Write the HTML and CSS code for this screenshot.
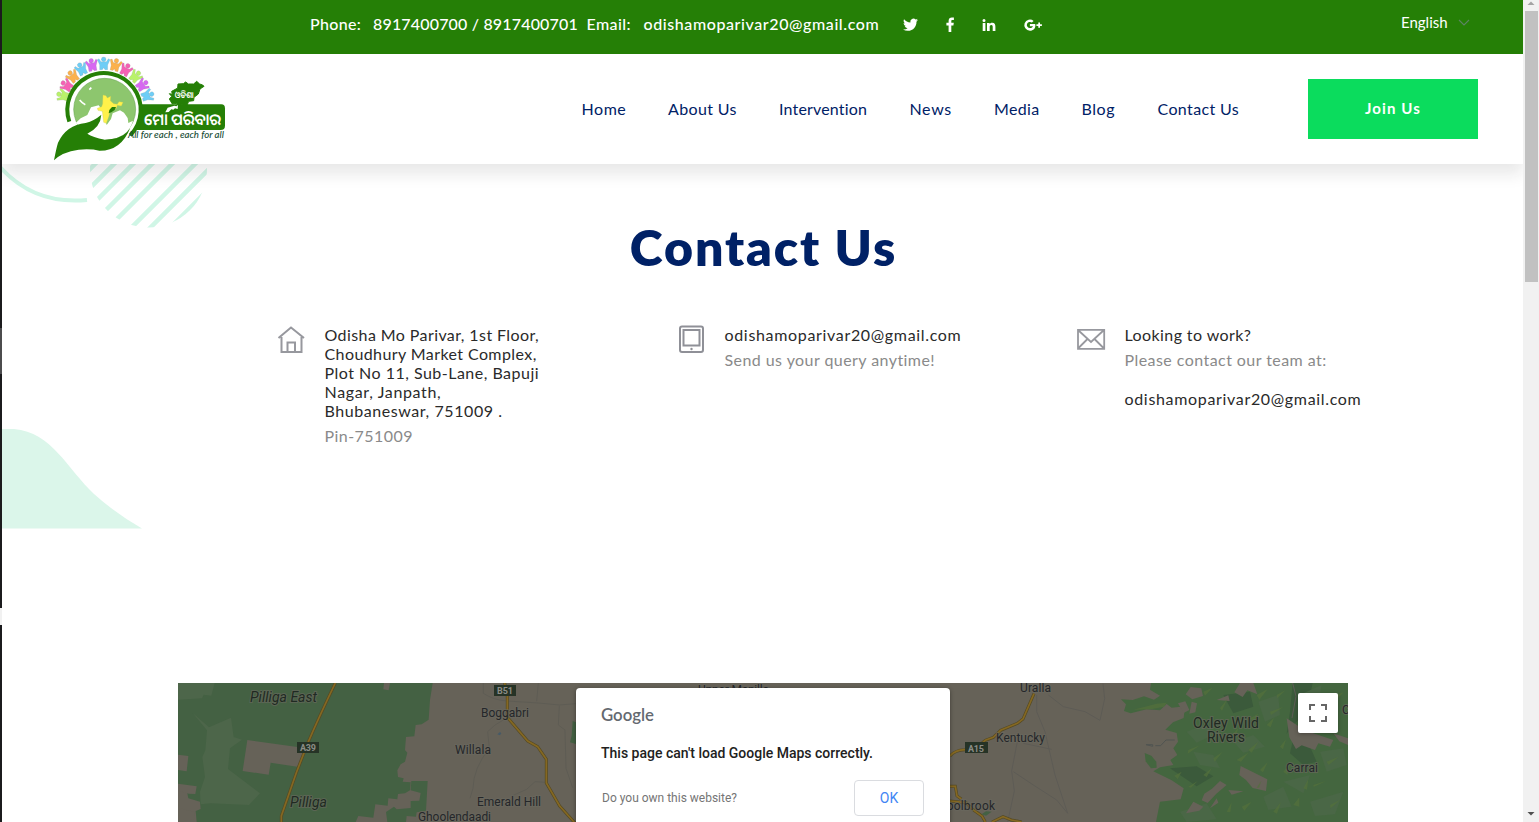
FILE: index.html
```html
<!DOCTYPE html>
<html lang="en">
<head>
<meta charset="utf-8">
<title>Contact Us - Odisha Mo Parivar</title>
<link rel="stylesheet" href="styles.css">
</head>
<body>
<div class="window">
  <div class="edge"><span class="edge-soft"></span><span class="edge-light"></span></div>
  <div class="page">
    <div class="topbar">
      <div class="contact-line">
        <span class="tb-label">Phone:</span><span class="tb-phone">8917400700 / 8917400701</span><span class="tb-email">Email:</span><span class="tb-mail">odishamoparivar20@gmail.com</span>
      </div>
      <svg class="social" viewBox="900 10 146 30">
        <g fill="#fff">
          <path transform="translate(903 17.2) scale(.625)" d="M24 4.557c-.883.392-1.832.656-2.828.775 1.017-.609 1.798-1.574 2.165-2.724-.951.564-2.005.974-3.127 1.195A4.92 4.92 0 0 0 11.830 8.290C7.740 8.095 4.110 6.130 1.680 3.150.390 5.360 1.010 8.260 3.200 9.720a4.900 4.900 0 0 1-2.230-.616c-.054 2.280 1.580 4.415 3.950 4.890a4.940 4.940 0 0 1-2.220.084 4.930 4.930 0 0 0 4.600 3.420A9.900 9.900 0 0 1 0 19.540a13.940 13.940 0 0 0 7.550 2.210c9.140 0 14.310-7.720 14-14.640A10 10 0 0 0 24 4.557z" />
          <path d="M948.600 32v-6.600h-2.200v-2.600h2.200v-1.900c0-2.200 1.300-3.400 3.300-3.400.900 0 1.700.1 2 .1v2.300h-1.300c-1.100 0-1.300.5-1.300 1.300v1.600h2.500l-.4 2.600h-2.100V32z"/>
          <path d="M982.700 23h2.700v8h-2.700zM984 19a1.500 1.500 0 1 1 0 3 1.500 1.500 0 0 1 0-3zM987 23h2.600v1.100c.4-.7 1.300-1.300 2.600-1.300 2.700 0 3.200 1.700 3.200 4V31h-2.700v-3.900c0-1 0-2.100-1.400-2.100s-1.600 1-1.600 2V31H987z"/>
          <path d="M1035.200 24h-5.300v2.200h3c-.3 1-1.200 1.900-2.900 1.900a3.100 3.100 0 1 1 1.900-5.500l1.700-1.700a5.600 5.600 0 1 0-3.600 9.800c3.400 0 5.400-2.300 5.400-5.500zM1038.300 22.500h1.700v1.800h1.900v1.600h-1.900v1.800h-1.700v-1.800h-1.900v-1.600h1.900z"/>
        </g>
      </svg>
      <div class="language"><span>English</span>
        <svg width="12" height="8" viewBox="0 0 12 8"><path d="M1 1l5 5 5-5" fill="none" stroke="#5d8464" stroke-width="1.1"/></svg>
      </div>
    </div>

    <header class="header">
      <svg class="logo" viewBox="50 54 180 110">
        <defs>
          <g id="person"><circle cy="-14" r="7"/><path d="M-19-13L-14-16-8-7H8L14-16 19-13 12 3 12 17H4L0 11-4 17H-12L-12 3z"/></g>
        </defs>
        <g transform="translate(40 50) scale(.33333)">
          <g stroke="#7d8a8a" stroke-opacity=".5" stroke-width="1">
          <use href="#person" transform="translate(70 137) rotate(-72)" fill="#b9f26a"/>
          <use href="#person" transform="translate(81 107) rotate(-55)" fill="#f561b4"/>
          <use href="#person" transform="translate(99 80) rotate(-38)" fill="#fbb14d"/>
          <use href="#person" transform="translate(125 58) rotate(-25)" fill="#6ecdf6"/>
          <use href="#person" transform="translate(156 46) rotate(-10)" fill="#d768f1"/>
          <use href="#person" transform="translate(191 42)" fill="#6ecdf6"/>
          <use href="#person" transform="translate(226 46) rotate(14)" fill="#fbb14d"/>
          <use href="#person" transform="translate(257 60) rotate(28)" fill="#f561b4"/>
          <use href="#person" transform="translate(286 80) rotate(42)" fill="#b9f26a"/>
          <use href="#person" transform="translate(306 106) rotate(55)" fill="#d768f1"/>
          <use href="#person" transform="translate(322 137) rotate(70)" fill="#6ecdf6"/>
          </g>
          <path d="M240 163H544Q555 163 555 175V227Q555 240 542 240H250z" fill="#257f06"/>
          <path d="M88 215A110 110 0 1 1 271 256" fill="#fff" stroke="#257f06" stroke-width="12"/>
          <circle cx="194" cy="178" r="93" fill="#8dc66e" stroke="#5d9d49" stroke-width="1.500"/>
          <path d="M108 218L122 205 142 195 153 172 176 166 187 181 200 225 213 207 218 190 240 181 252 188 263 204 265 219 279 212Q264 267 194 270 158 269 138 250z" fill="#fff"/>
          <path d="M119 150Q127 160 136 164M148 119l6-6" stroke="#fff" stroke-width="5" fill="none"/>
          <path d="M189 135l9 2 4 7 10-5-1 13 10 9 11 2 5-8 12 2-5 11-12-2-3 9-19 9-3 14-8 22-8-3-4-33-13-3-2-6 13-5 3-9z" fill="#fff14a" stroke="#c8ce54"/>
          <path d="M208 180l8-9h12l-4 9-10 7-8 3z" fill="#257f06"/>
          <path d="M42 331Q49 294 54 278 79 225 137 219 163 212 184 194 182 231 142 251 158 262 194 269 239 268 261 246L271 233Q243 303 178 302 154 296 116 299 66 306 42 331z" fill="#257f06"/>
          <path d="M388 147l7-8-7-8 9 2-2-9 13-7 5-3 1-12 16-1 7-5 8 6h16l9-8 9 8 9 3 4 4-12 8-5 15-13 10-1 10-15 2-5 12-17-2-9 5-6-9-12 2z" fill="#257f06" stroke="#257f06" stroke-width="3"/>
          <path d="M376 187l7-14 20-6 6 2 5-4-1 12-8-2-5 4-6-1-8 8z" fill="#fff"/>
          <g fill="#fff" font-family="Noto Sans Oriya, Noto Sans, sans-serif">
            <text x="404" y="145" font-size="26" font-weight="600" textLength="57" lengthAdjust="spacingAndGlyphs">ଓଡିଶା</text>
            <text x="312" y="226" font-size="48" font-weight="600" textLength="231" lengthAdjust="spacingAndGlyphs">ମୋ ପରିବାର</text>
          </g>
          <text x="264" y="265" font-size="28" font-family="Lato, sans-serif" font-style="italic" font-weight="500" fill="#174d35" textLength="288" lengthAdjust="spacingAndGlyphs">All for each , each for all</text>
        </g>
      </svg>
      <nav class="nav">
        <a class="n-home">Home</a><a class="n-about">About Us</a><a class="n-int">Intervention</a><a class="n-news">News</a><a class="n-media">Media</a><a class="n-blog">Blog</a><a class="n-contact">Contact Us</a>
      </nav>
      <a class="join">Join Us</a>
    </header>

    <main class="main">
      <svg class="deco" viewBox="2 164 220 370">
        <g fill="none" stroke="#d0f6e6">
          <path d="M0 167Q34 205 87 200" stroke-width="4"/>
          <g stroke-width="4.500" clip-path="url(#disc)">
            <path d="M82 177l25-25M88 190l40-40M95 202l55-55M104 212l66-66M114 222l80-80M128 231l90-90M142 236l85-85M162 236l60-60"/>
          </g>
        </g>
        <clipPath id="disc"><circle cx="148.500" cy="169" r="58.500"/></clipPath>
        <path d="M2 429H14C52 432 68 470 94 494Q115 513 142 528.500H2z" fill="#dbf6ea"/>
      </svg>
      <h1 class="title">Contact Us</h1>
      <div class="info">
        <div class="info-item">
          <svg class="icon" viewBox="276 324 32 32"><path d="M278.500 338L291 327.500 304 338M281.500 337v15h20v-15M287.500 352v-9.500h7.500v9.500" fill="none" stroke="#97989e" stroke-width="2"/></svg>
          <div class="info-text">
            <h3 class="address"><span class="a1">Odisha Mo Parivar, 1st Floor,</span><br><span class="a2">Choudhury Market Complex,</span><br><span class="a3">Plot No 11, Sub-Lane, Bapuji</span><br><span class="a4">Nagar, Janpath,</span><br><span class="a5">Bhubaneswar, 751009 .</span></h3>
            <p class="pin">Pin-751009</p>
          </div>
        </div>
        <div class="info-item">
          <svg class="icon" viewBox="676 324 32 32"><g fill="none" stroke="#8f9097" stroke-width="2"><rect x="680" y="326.500" width="23" height="25.500" rx="2"/><rect x="683.500" y="330" width="16" height="15.500"/></g><circle cx="691.500" cy="349" r="1.200" fill="#8f9097"/></svg>
          <div class="info-text"><h3 class="mail">odishamoparivar20@gmail.com</h3><p class="query">Send us your query anytime!</p></div>
        </div>
        <div class="info-item">
          <svg class="icon" viewBox="1076 324 32 32"><path d="M1078 329.800h26.200v19h-26.200zM1078 330l13 12 13-12M1078 348.500l9.500-9.500M1104 348.500l-9.500-9.500" fill="none" stroke="#97989e" stroke-width="1.800"/></svg>
          <div class="info-text"><h3 class="looking">Looking to work?</h3><p class="team">Please contact our team at:</p><h3 class="mail second">odishamoparivar20@gmail.com</h3></div>
        </div>
      </div>

      <section class="map">
        <svg class="map-art" viewBox="178 683 1170 139">
          <rect x="178" y="683" width="1170" height="139" fill="#666258"/>
          <g transform="translate(170 675) scale(.33333)">
            <path d="M24 24H788L780 75 776 134 755 148 737 150 733 184 708 186 705 225 712 233 705 260 692 268 682 286 684 306 701 310 698 320 722 322 720 346 705 355 684 357 682 373 655 370 653 392 616 388 610 428 565 423 557 441H80L77 408 92 402 90 380 55 370 50 345 24 340z" fill="#446143"/>
            <path d="M24 24H134L124 62 101 59 96 70 24 74zM68 114L117 157 183 128 191 186 216 194 180 220 174 282 270 355 237 390 122 385 92 388 90 350 105 306 97 246 106 226 111 166z" fill="#4d664a"/>
            <path d="M232 195L382 216 408 232 382 275 302 263 296 299 218 288zM24 239L55 243 50 289 24 285zM24 326L80 334 76 357 56 356 24 347zM642 24H660L656 46 640 43zM35 401L75 411 72 433 24 441V405z" fill="#666258"/>
            <path d="M724 318L773 318 768 408 740 412 738 425 710 423 708 441H652L648 411 672 395 680 403 722 399 722 378 748 377 752 354 722 346zM1208 138l10 4v65l-18-5 5-20z" fill="#446143"/>
            <g fill="none" stroke="#5e5c54" stroke-width="3"><path d="M940 24V55Q970 75 1010 78L1105 84 1168 90 1218 86M1105 24l-5 55M1168 92l-3 58 20 15 3 115 20 58M1005 132Q970 150 953 170L958 220Q910 280 909 340L900 370M1128 322L1095 320 1070 343 1025 363"/></g>
            <g fill="none" stroke="#554a24" stroke-width="9"><path d="M496 24Q445 130 414 203L379 293 334 423V441M1004 24l8 40v63l61 71 30 17 26 38v71l40 69 46 51"/></g>
            <g fill="none" stroke="#856822" stroke-width="5"><path d="M496 24Q445 130 414 203L379 293 334 423V441M1004 24l8 40v63l61 71 30 17 26 38v71l40 69 46 51"/></g>
            <path d="M982 178l8-7 4 4-4 6z" fill="#465a67"/>
          </g>
          <g transform="translate(940 675) scale(.33333)">
            <path d="M633 24L630 44 660 62 642 74 612 64 578 75 543 73 558 88 552 108 572 115 620 103 660 106 680 87 695 98 735 94 731 129 699 142 676 164 710 174 714 200 700 220 712 240 691 255 700 270 660 277 640 289 695 316 731 340 722 373 660 380 648 441H1224V24z" fill="#44663f"/>
            <path d="M614 234l20 8 15 18 1 18-17 2-16-21z" fill="#44663f"/>
            <path d="M1058 24H1118L1100 110 1060 150 1040 176 1050 110zM1060 190L1110 215 1130 260 1090 270 1050 235zM690 280l80-6 50 30-50 30zM850 60l80-10 10 45-60 20z" fill="#3b5a3b"/>
            <g fill="#4a6746"><path d="M740 170l50-20 40 25-60 28zM880 200l60-20 35 35-65 18zM1030 320l80-20-20 55zM720 410l80-25 30 48-90 8zM970 365l60-30 25 60-70 10zM1110 380l100-30-25 68-60 5zM955 80l60-20 5 60-45 20zM1090 55l55-25-10 58-35 22zM760 230l60 10 20 40-60-10zM1140 230l70-10 10 50-60 20z"/></g>
            <path d="M752 36l-15 22 20 15 32-10-5-23zM714 85l22-6 12 26-17 9zM755 80l16 5-5 27-18 4zM900 24h40l12 34-30-12-14 20-25-14zM1040 130l38 25 42 20 60 20-10 20-35-10-10 20-40-14-17 11-20-35zM902 273l80 40-4 35-40-9-20-24-20-15zM860 330l-20-12-24 23-23 15-8 20 18 8 26-28zM760 380l30 15-12 12-40 8zM1180 175l44 15v20l-26-11zM830 75l35-14 4 17zM865 345l45 4-35 10zM830 370l-20 30 25-17z" fill="#666258"/>
            <g fill="#53703c" opacity=".75"><path d="M580 104l70-18 30-3-8 12-40 8zM790 50l28-12-23 24zM950 60l33-18-25 32zM990 110l40-14-37 24zM840 100l22-28-16 35zM745 225l35-14-37 25zM820 250l28-20-24 30zM890 255l35-22-22 27zM960 285l23-23-14 30zM1030 290l20-25-8 34zM1120 330l38-12-37 18zM1160 260l36-15-30 25zM1000 410l23-29-12 35zM905 395l30-15-22 27zM860 410l15-28-4 30zM745 335l28-17-20 20zM1060 390l18-23 0 28zM1170 390l31-16-29 26zM1010 60l27-15-25 25zM725 290l-22 12 10 10zM950 338l14-21-7 21zM1090 340l15-28-4 32zM1189 60l22-8-19 19zM1145 95l26 9-19 15zM925 225l30-25-20 33zM875 180l20-20-10 28zM1020 215l18-22-9 30zM790 300l25-20-15 26zM980 150l22-22-10 29zM930 130l25-14-16 24z"/></g>
            <g fill="none" stroke="#5d5b55" stroke-width="3"><path d="M290 60v50l25 60 30 130 38 115M325 60l45 35 65 15 45 26 14-65-5-45M232 200l-17 88 8 60-20 93M220 290l60 40 70 45 33 40M250 205l85 18M1058 24l10 40-12 65"/></g>
            <path d="M618 209h20v5zm28 3h16l16-17h26" fill="none" stroke="#505451" stroke-width="3"/>
            <g fill="none" stroke="#554a24" stroke-width="9"><path d="M282 56L249 132 232 145 182 166 160 187 136 196 125 205 75 224Q45 225 30 243M30 334H46L51 363 64 372M30 378l48 5 20 20 28 20 10 18M156 441l33-16 25 10 31 6"/></g>
            <g fill="none" stroke="#856822" stroke-width="5"><path d="M282 56L249 132 232 145 182 166 160 187 136 196 125 205 75 224Q45 225 30 243M30 334H46L51 363 64 372M30 378l48 5 20 20 28 20 10 18M156 441l33-16 25 10 31 6"/></g>
            <path d="M125 418l13-9 17 1-17 12z" fill="#446143"/>
          </g>
          <g fill="#263326"><rect x="297" y="742" width="22" height="11"/><rect x="494" y="685" width="22" height="11"/><rect x="965" y="742" width="23" height="11"/></g>
          <g class="road-labels"><text x="300" y="751" textLength="16">A39</text><text x="497" y="693.500" textLength="16">B51</text><text x="968" y="751.500" textLength="16">A15</text></g>
          <g class="map-labels"><text x="481" y="717" textLength="48">Boggabri</text><text x="455" y="754" textLength="36">Willala</text><text x="477" y="806" textLength="64">Emerald Hill</text><text x="418" y="821" textLength="73">Ghoolendaadi</text><text x="698" y="694" textLength="71">Upper Manilla</text><text x="1020" y="692" textLength="31">Uralla</text><text x="996" y="742" textLength="49">Kentucky</text><text x="936" y="809.500" textLength="59">Woolbrook</text><text x="1286" y="771.500" textLength="32">Carrai</text><text x="1342" y="714">C</text></g>
          <g class="map-labels park"><text class="slant" x="250" y="702" textLength="67">Pilliga East</text><text class="slant" x="290" y="807" textLength="37">Pilliga</text><text x="1193" y="728" textLength="66">Oxley Wild</text><text x="1207" y="742" textLength="38">Rivers</text></g>
        </svg>
        <div class="fullscreen"><svg width="18" height="18" viewBox="0 0 18 18"><path d="M0 0h6v2H2v4H0zM12 0h6v6h-2V2h-4zM0 12h2v4h4v2H0zM16 12h2v6h-6v-2h4z" fill="#666"/></svg></div>
        <div class="dialog">
          <svg class="google" viewBox="0 0 54 20" width="54" height="20"><text x="0" y="15" textLength="53" lengthAdjust="spacingAndGlyphs">Google</text></svg>
          <p class="dialog-msg">This page can't load Google Maps correctly.</p>
          <div class="dialog-foot"><span>Do you own this website?</span><span class="ok">OK</span></div>
        </div>
      </section>
    </main>
  </div>
  <div class="scrollbar">
    <svg width="16" height="11" viewBox="0 0 16 11"><path d="M4.500 5L8 1.500 11.500 5z" fill="#a3a3a3"/></svg>
    <div class="thumb"></div>
    <svg class="down" width="16" height="16" viewBox="0 0 16 16"><path d="M4.500 6L8 9.500 11.500 6z" fill="#505050"/></svg>
  </div>
</div>
</body>
</html>
```
FILE: styles.css
```css
* { box-sizing: border-box; }
body { margin: 0; overflow: hidden; background: #fff; font-family: Lato, "Noto Sans", sans-serif; font-size: 16px; }
h1, h3, p { margin: 0; font-weight: 400; }
svg { display: block; }
.window { display: flex; height: 822px; }
.edge { width: 2px; background: #1b1b1d; display: flex; flex-direction: column; padding-top: 328px; }
.edge-soft { height: 46px; background: #4c4c4e; }
.edge-light { height: 17px; margin-top: 234px; background: #f1f1f1; }
.page { width: 1521px; overflow: hidden; }

.topbar { height: 54px; background: #257f06; color: #fff; display: flex; padding-left: 308px; }
.contact-line { display: flex; width: 590px; line-height: 48px; white-space: nowrap; font-weight: 500; }
.tb-label { width: 63px; letter-spacing: .35px; }
.tb-phone { width: 213.500px; letter-spacing: .17px; }
.tb-email { width: 57px; letter-spacing: .4px; }
.tb-mail { letter-spacing: .59px; }
.social { width: 146px; height: 30px; margin-top: 10px; }
.language { display: flex; margin-left: 355px; gap: 10px; line-height: 45px; font-size: 15px; }
.language svg { margin-top: 19px; }

.header { height: 110px; background: #fff; display: flex; position: relative; z-index: 2; padding-left: 48px; box-shadow: 0 10px 15px rgba(25, 25, 25, .1); }
.logo { width: 180px; height: 110px; }
.nav { display: grid; grid-template-columns: 86.500px 111px 130.500px 84.500px 87.500px 76px 82px; margin-left: 351.500px; height: 110px; line-height: 109px; color: #002166; white-space: nowrap; }
.n-home { letter-spacing: .55px; }
.n-about, .n-contact { letter-spacing: .37px; }
.n-int { letter-spacing: .17px; }
.n-news { letter-spacing: .65px; }
.n-media { letter-spacing: .35px; }
.n-blog { letter-spacing: .55px; }
.join { width: 170px; height: 60px; margin: 25px 0 0 68.500px; background: #0bdc5d; color: #fff; font-weight: 700; font-size: 15px; letter-spacing: 1.100px; line-height: 59px; text-align: center; }

.main { position: relative; height: 658px; background: #fff; display: flex; flex-direction: column; }
.deco { position: absolute; left: 0; top: 0; width: 220px; height: 370px; }
.title { width: 1521px; height: 68px; margin-top: 50px; text-align: center; color: #002166; font-weight: 800; font-size: 50px; letter-spacing: 1.900px; text-indent: 2px; line-height: 67px; }
.info { display: grid; grid-template-columns: 400px 400px 300px; padding: 42px 0 0 274px; height: 401px; }
.info-item { display: flex; }
.icon { width: 32px; height: 32px; }
.info-text { margin-left: 16.500px; padding-top: 1px; white-space: nowrap; }
.info-text h3 { font-size: 16px; line-height: 19px; color: #2a2a2a; }
.info-text p { line-height: 25px; margin-top: 3px; color: #8a8a8a; }
.info-text .second { margin-top: 17px; }
.a1, .a2, .looking { letter-spacing: .41px; }
.a3 { letter-spacing: .49px; }
.a4 { letter-spacing: .65px; }
.a5 { letter-spacing: .57px; }
.pin, .query, .team { letter-spacing: .44px; }
.mail { letter-spacing: .67px; }

.map { position: relative; width: 1170px; height: 139px; margin-left: 176px; overflow: hidden; }
.map-art { width: 1170px; height: 139px; }
.map-labels { font: 12px Roboto, sans-serif; fill: #25272a; stroke: #6b6960; stroke-width: 2px; paint-order: stroke; stroke-opacity: .6; }
.park { font-size: 14px; fill: #1f2a22; }
.slant { font-style: italic; }
.road-labels { font: bold 9px Roboto, sans-serif; fill: #8b8d86; }
.fullscreen { position: absolute; left: 1120px; top: 10px; width: 40px; height: 40px; background: #fff; border-radius: 2px; padding: 11px; box-shadow: 0 1px 4px rgba(0, 0, 0, .3); }
.dialog { position: absolute; left: 398px; top: 5px; width: 374px; height: 170px; padding: 18px 26px 0 25px; background: #fff; border-radius: 4px; box-shadow: 0 1px 4px rgba(0, 0, 0, .4); font-family: Roboto, sans-serif; }
.google { font: 600 18px Lato, sans-serif; fill: #646970; overflow: visible; }
.dialog-msg { margin-top: 16px; font-size: 14px; font-weight: 500; line-height: 22px; color: #212121; white-space: nowrap; }
.dialog-foot { display: flex; justify-content: space-between; align-items: center; margin-top: 16px; padding-left: 1px; font-size: 12px; color: #757575; }
.ok { width: 70px; height: 36px; border: 1px solid #dadce0; border-radius: 4px; text-align: center; line-height: 35px; font-size: 14px; color: #4285f4; }

.scrollbar { width: 16px; background: #f1f1f1; display: flex; flex-direction: column; }
.thumb { width: 13px; height: 271px; margin-left: 2px; background: #c1c1c1; }
.down { margin-top: auto; }
```
